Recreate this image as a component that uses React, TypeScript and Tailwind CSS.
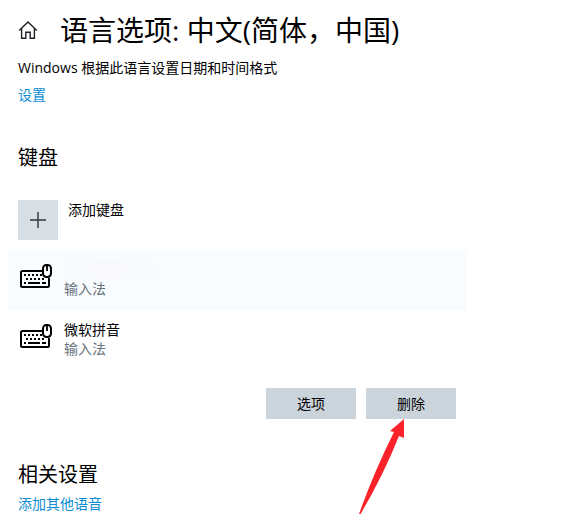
type Keyboard = {
  id: string;
  name: string;
  kind: string;
};

const keyboards: Keyboard[] = [
  { id: "hidden", name: "", kind: "输入法" },
  { id: "pinyin", name: "微软拼音", kind: "输入法" },
];

function HomeIcon() {
  return (
    <svg viewBox="0 0 20 20" className="h-5 w-5" fill="none" stroke="#1c1f24" strokeWidth="1.4">
      <path d="M1.2 10.6 10 2l8.8 8.6" />
      <path d="M3.6 8.6v9.7h4.2v-6.1h4.4v6.1h4.2V8.6" />
    </svg>
  );
}

function KeyboardIcon() {
  return (
    <svg viewBox="0 0 32 24" className="h-6 w-8 shrink-0" fill="none" stroke="#000">
      <path d="M22 7H2.5Q1 7 1 8.5v13Q1 23 2.5 23h25q1.5 0 1.5-1.5V14" strokeWidth="2" />
      <path d="M4 11h2M8 11h2M12 11h2M16 11h2M20 11h2" strokeWidth="2" />
      <path d="M6 15h2M10 15h2M14 15h2M18 15h2M22 15h2" strokeWidth="2" />
      <path d="M4 19h2M8 19h12M22 19h4" strokeWidth="2" />
      <rect x="23" y="1" width="8" height="12" rx="3.4" fill="#fff" strokeWidth="2" />
      <path d="M27 2v5" strokeWidth="1.8" />
    </svg>
  );
}

function KeyboardRow({ keyboard }: { keyboard: Keyboard }) {
  return (
    <li
      className={`flex h-[59px] gap-3 pt-[13px] pl-3 ${
        keyboard.name ? "" : "bg-[#f8fcff]"
      }`}
    >
      <KeyboardIcon />
      <div className="min-w-0 flex-1 -mt-1 leading-[19px]">
        {keyboard.name ? (
          <p className="h-[19px]">{keyboard.name}</p>
        ) : (
          <div className="h-[19px] w-24 bg-linear-to-r from-[#f8fafc] via-[#f9f9fb] to-[#f8fcff]" />
        )}
        <p className="text-[#69737d]">{keyboard.kind}</p>
      </div>
    </li>
  );
}

export default function App() {
  return (
    <main className="bg-white pt-3 font-['Open_Sans','Noto_Sans_CJK_SC',sans-serif] text-sm leading-5 text-black">
      <header className="flex items-center gap-[22px] pl-[18px]">
        <a href="#home" aria-label="主页">
          <HomeIcon />
        </a>
        <h1 className="text-[28px] leading-9">语言选项: 中文(简体，中国)</h1>
      </header>

      <section className="mt-2.5 pl-[18px]">
        <p>Windows 根据此语言设置日期和时间格式</p>
        <a href="#format" className="mt-[7px] block w-fit text-[#0a8bd2]">
          设置
        </a>
      </section>

      <section className="mt-[39px] ml-2 max-w-[458px]">
        <h2 className="pl-2.5 text-xl leading-7">键盘</h2>
        <button type="button" className="mt-7 ml-2.5 flex gap-2.5 text-left">
          <span className="flex h-10 w-10 items-center justify-center bg-[#d7dee4]">
            <svg viewBox="0 0 18 18" className="h-[18px] w-[18px]" stroke="#30363c" strokeWidth="1.4">
              <path d="M9 1v16M1 9h16" />
            </svg>
          </span>
          <span>添加键盘</span>
        </button>

        <ul className="mt-[11px] flex flex-col gap-px">
          {keyboards.map((keyboard) => (
            <KeyboardRow key={keyboard.id} keyboard={keyboard} />
          ))}
        </ul>

        <div className="mt-[18px] flex justify-end gap-2.5 pr-2.5">
          <button type="button" className="h-[31px] w-[90px] bg-[#ccd4db]">
            选项
          </button>
          <div className="relative">
            <button type="button" className="h-[31px] w-[90px] bg-[#ccd4db]">
              删除
            </button>
            <svg
              viewBox="0 0 48 96"
              className="pointer-events-none absolute top-full right-[50px] h-24 w-12"
              fill="#fb2329"
            >
              <path d="M46 0v19l-5-2Q25 57 2 96L1 95Q16 53 36 13l-4-1Z" />
            </svg>
          </div>
        </div>
      </section>

      <section className="mt-[42px] pl-[18px]">
        <h2 className="text-xl leading-7">相关设置</h2>
        <a href="#add-voice" className="mt-[5px] block w-fit text-[#0a8bd2]">
          添加其他语音
        </a>
      </section>
    </main>
  );
}
